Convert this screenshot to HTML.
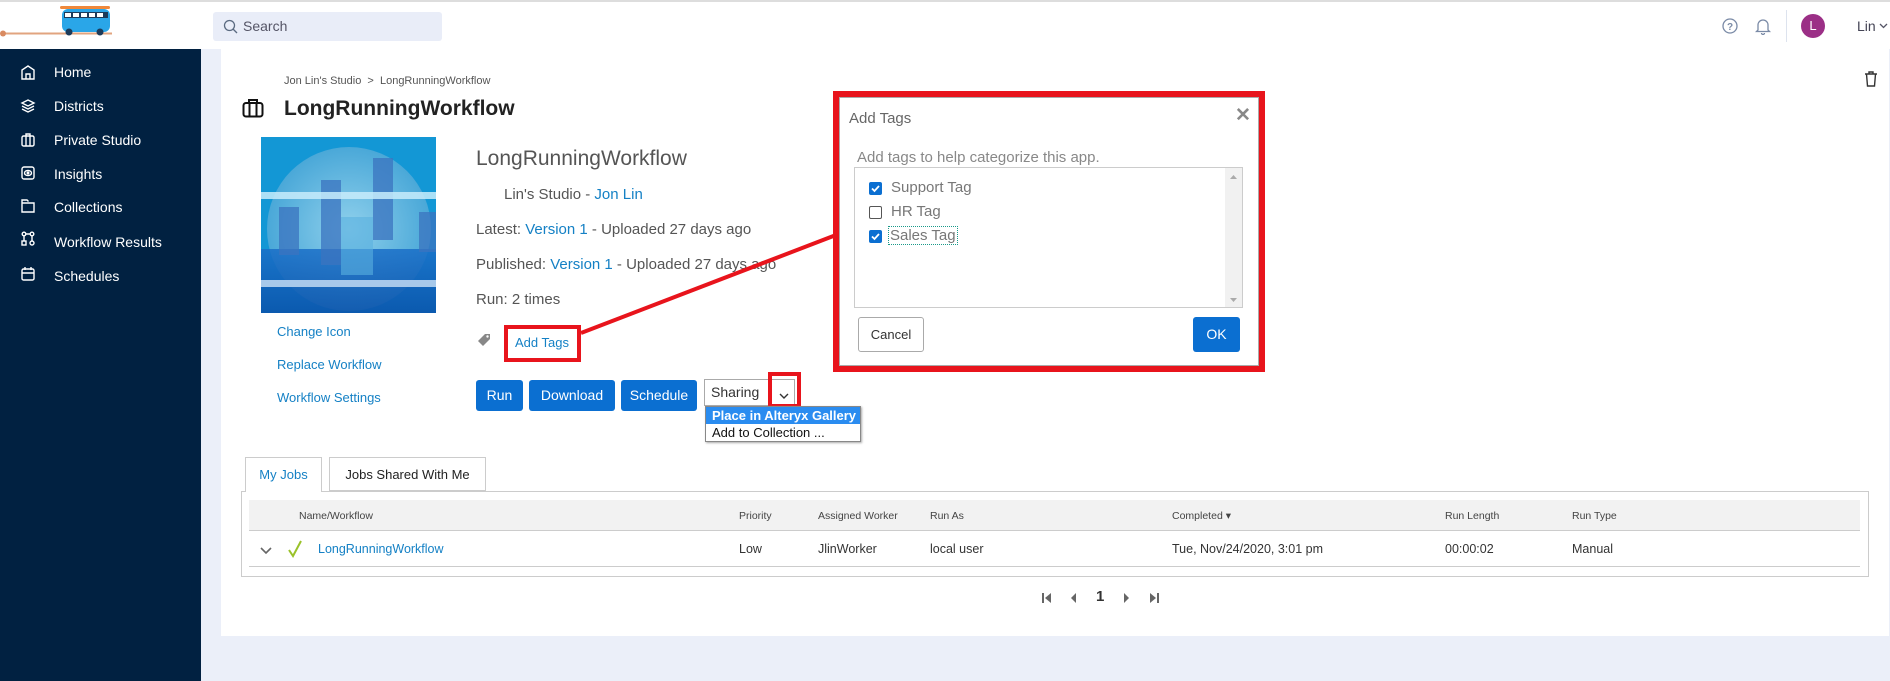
<!DOCTYPE html>
<html><head><meta charset="utf-8"><style>
*{box-sizing:border-box;margin:0;padding:0}
body{width:1890px;height:681px;overflow:hidden;background:#ebeff9;font-family:"Liberation Sans",sans-serif;position:relative}
.a{position:absolute}
.blue{color:#1581c5 !important}
.nav{position:absolute;left:54px;color:#fff;font-size:14px}
.btn{position:absolute;top:380px;height:31px;background:#0b6fd1;color:#fff;font-size:14px;border-radius:3px;text-align:center;line-height:31px}
.th{position:absolute;top:510px;font-size:10.5px;color:#444}
.td{position:absolute;top:542px;font-size:12.5px;color:#333}
.cb{position:absolute;left:869px;width:13px;height:13px;border-radius:2px}
.cbon{background:#0b6fd1}
.cboff{border:1px solid #555;background:#fff}
.lt{position:absolute;left:891px;font-size:15px;color:#777}
</style></head><body>
<div class="a" style="left:0;top:0;width:1890px;height:49px;background:#fff;border-top:2px solid #ddd"></div>
<svg class="a" style="left:0;top:0" width="120" height="45" viewBox="0 0 120 45">
<line x1="3" y1="33.5" x2="112" y2="33.5" stroke="#e2a47f" stroke-width="2"/>
<circle cx="3" cy="33.5" r="3" fill="#d98a60"/>
<rect x="60" y="6" width="50" height="3" rx="1.5" fill="#f0883a"/>
<rect x="62" y="9" width="48" height="23" rx="6" fill="#2aa6e8"/>
<rect x="64" y="12" width="44" height="6" fill="#1c3b5a"/>
<g fill="#fff"><rect x="65" y="13" width="6" height="4"/><rect x="73" y="13" width="6" height="4"/><rect x="81" y="13" width="6" height="4"/><rect x="89" y="13" width="6" height="4"/><rect x="97" y="13" width="6" height="4"/></g>
<circle cx="69" cy="32" r="3.5" fill="#1c3b5a"/><circle cx="100" cy="32" r="3.5" fill="#1c3b5a"/>
</svg>
<div class="a" style="left:213px;top:12px;width:229px;height:29px;background:#e9edf8;border-radius:3px"></div>
<svg class="a" style="left:223px;top:19px" width="15" height="15" viewBox="0 0 15 15"><circle cx="6.5" cy="6.5" r="5" fill="none" stroke="#5a6a80" stroke-width="1.3"/><line x1="10" y1="10" x2="14" y2="14" stroke="#5a6a80" stroke-width="1.3"/></svg>
<div class="a" style="left:243px;top:18px;font-size:14px;color:#556">Search</div>
<svg class="a" style="left:1722px;top:18px" width="16" height="16" viewBox="0 0 16 16"><circle cx="8" cy="8" r="7" fill="none" stroke="#7a8aa6" stroke-width="1.3"/><text x="8" y="12" font-size="10" text-anchor="middle" fill="#7a8aa6" font-family="Liberation Sans" font-weight="bold">?</text></svg>
<svg class="a" style="left:1755px;top:17px" width="16" height="18" viewBox="0 0 16 18"><path d="M3 13V8a5 5 0 0 1 10 0v5l1.5 1.5h-13z M6.5 16a1.5 1.5 0 0 0 3 0" fill="none" stroke="#7a8aa6" stroke-width="1.3"/></svg>
<div class="a" style="left:1786px;top:10px;width:1px;height:32px;background:#dde3ee"></div>
<div class="a" style="left:1801px;top:14px;width:24px;height:24px;border-radius:50%;background:#9b2f86;color:#fff;font-size:13px;text-align:center;line-height:24px">L</div>
<div class="a" style="left:1857px;top:18px;font-size:14px;color:#445">Lin</div>
<svg class="a" style="left:1879px;top:23px" width="9" height="6" viewBox="0 0 9 6"><path d="M1 1l3.5 3.5L8 1" fill="none" stroke="#556" stroke-width="1.3"/></svg>
<div class="a" style="left:0;top:49px;width:201px;height:632px;background:#012141"></div>
<svg class="a" style="left:20px;top:64px" width="16" height="230" viewBox="0 0 16 230" fill="none" stroke="#fff" stroke-width="1.4">
<path d="M2 15V6l6-4 6 4v9zM6 15V10h4v5"/>
<path d="M8 36l6 3-6 3-6-3zM2 42l6 3 6-3M2 45l6 3 6-3"/>
<rect x="2" y="72" width="12" height="10" rx="1.5"/><path d="M6 72v-2h4v2M6 72v10M10 72v10"/>
<rect x="2" y="103" width="12" height="12" rx="2"/><ellipse cx="8" cy="109" rx="3.5" ry="2.5"/><circle cx="8" cy="109" r="0.8" fill="#fff"/>
<path d="M2 139h12v9H2zM2 139v-3h5l1.5 1.5"/>
<circle cx="4" cy="170" r="1.8"/><circle cx="12" cy="170" r="1.8"/><rect x="2" y="177" width="4" height="4"/><circle cx="12" cy="179" r="2"/><path d="M4 172v5M12 172v5M6 170h4"/>
<rect x="2" y="205" width="12" height="11" rx="1.5"/><path d="M2 209h12M5 203v3M11 203v3"/>
</svg>
<div class="nav" style="top:64px">Home</div>
<div class="nav" style="top:98px">Districts</div>
<div class="nav" style="top:132px">Private Studio</div>
<div class="nav" style="top:166px">Insights</div>
<div class="nav" style="top:199px">Collections</div>
<div class="nav" style="top:234px">Workflow Results</div>
<div class="nav" style="top:268px">Schedules</div>
<div class="a" style="left:221px;top:49px;width:1668px;height:587px;background:#fff"></div>
<div class="a" style="left:284px;top:75px;font-size:11px;color:#555">Jon Lin's Studio &nbsp;&gt;&nbsp; LongRunningWorkflow</div>
<svg class="a" style="left:242px;top:98px" width="22" height="20" viewBox="0 0 22 20" fill="none" stroke="#111" stroke-width="2"><rect x="1.5" y="5" width="19" height="13.5" rx="2.5"/><path d="M7 5V2h8v3M7.5 5v13.5M14.5 5v13.5"/></svg>
<div class="a" style="left:284px;top:97px;font-size:21px;font-weight:bold;color:#222">LongRunningWorkflow</div>
<svg class="a" style="left:1864px;top:71px" width="14" height="16" viewBox="0 0 14 16" fill="none" stroke="#333" stroke-width="1.4"><path d="M1 3h12M5 3V1h4v2M2.5 3l1 12h7l1-12"/></svg>
<svg class="a" style="left:261px;top:137px" width="175" height="176" viewBox="0 0 175 176">
<defs><radialGradient id="g" cx="0.5" cy="0.5" r="0.5"><stop offset="0" stop-color="#8fd0ec"/><stop offset="1" stop-color="#4aa8d8"/></radialGradient>
<linearGradient id="d" x1="0" y1="0" x2="0" y2="1"><stop offset="0" stop-color="#1a6fc8"/><stop offset="1" stop-color="#0a4fa8"/></linearGradient></defs>
<rect width="175" height="176" fill="#1397d5"/>
<circle cx="88" cy="92" r="82" fill="url(#g)"/>
<rect x="0" y="112" width="175" height="64" fill="url(#d)" opacity="0.85"/>
<g fill="#3b74c0" opacity="0.75"><rect x="18" y="70" width="20" height="48"/><rect x="60" y="43" width="20" height="85"/><rect x="112" y="21" width="20" height="82"/><rect x="158" y="75" width="17" height="40"/></g>
<rect x="80" y="80" width="32" height="58" fill="#5ab0e0" opacity="0.6"/>
<rect x="0" y="55" width="175" height="7" fill="#c8ecfb" opacity="0.85"/>
<rect x="0" y="143" width="175" height="7" fill="#b8d4f0" opacity="0.9"/>
</svg>
<div class="a blue" style="left:277px;top:324px;font-size:13px">Change Icon</div>
<div class="a blue" style="left:277px;top:357px;font-size:13px">Replace Workflow</div>
<div class="a blue" style="left:277px;top:390px;font-size:13px">Workflow Settings</div>
<div class="a" style="left:476px;top:147px;font-size:21px;color:#555">LongRunningWorkflow</div>
<div class="a" style="left:504px;top:186px;font-size:15px;color:#555">Lin's Studio - <span class="blue">Jon Lin</span></div>
<div class="a" style="left:476px;top:221px;font-size:15px;color:#555">Latest: <span class="blue">Version 1</span> - Uploaded 27 days ago</div>
<div class="a" style="left:476px;top:256px;font-size:15px;color:#555">Published: <span class="blue">Version 1</span> - Uploaded 27 days ago</div>
<div class="a" style="left:476px;top:291px;font-size:15px;color:#555">Run: 2 times</div>
<svg class="a" style="left:476px;top:332px" width="16" height="16" viewBox="0 0 16 16"><path d="M2 9l7-7h5v5l-7 7z" fill="#888"/><circle cx="11.5" cy="4.5" r="1.2" fill="#fff"/></svg>
<div class="a blue" style="left:515px;top:335px;font-size:13px">Add Tags</div>
<div class="a" style="left:504px;top:325px;width:77px;height:37px;border:4px solid #e8141c"></div>
<svg class="a" style="left:0;top:0" width="1890" height="681"><line x1="581" y1="333" x2="836" y2="235" stroke="#e8141c" stroke-width="4"/></svg>
<div class="btn" style="left:476px;width:47px">Run</div>
<div class="btn" style="left:529px;width:86px">Download</div>
<div class="btn" style="left:621px;width:76px">Schedule</div>
<div class="a" style="left:704px;top:379px;width:91px;height:27px;border:1px solid #aaa;background:#fff"></div>
<div class="a" style="left:711px;top:384px;font-size:14px;color:#333">Sharing</div>
<div class="a" style="left:768px;top:372px;width:33px;height:36px;border:4px solid #e8141c"></div>
<svg class="a" style="left:779px;top:393px" width="10" height="6" viewBox="0 0 10 6"><path d="M1 1l4 4 4-4" fill="none" stroke="#333" stroke-width="1.4"/></svg>
<div class="a" style="left:705px;top:406px;width:156px;height:36px;border:1px solid #888;background:#fff;box-shadow:1px 1px 2px #aaa"></div>
<div class="a" style="left:706px;top:407px;width:154px;height:17px;background:#2a8cf0;color:#fff;font-size:13px;font-weight:bold;padding-left:6px;line-height:17px">Place in Alteryx Gallery</div>
<div class="a" style="left:712px;top:425px;font-size:13px;color:#111">Add to Collection ...</div>
<div class="a" style="left:833px;top:91px;width:432px;height:281px;border:6px solid #e8141c;background:#fff"></div>
<div class="a" style="left:839px;top:97px;width:420px;height:269px;border:1px solid #aaa"></div>
<div class="a" style="left:849px;top:110px;font-size:15px;color:#666">Add Tags</div>
<div class="a" style="left:1235px;top:104px;font-size:19px;font-weight:bold;color:#888">✕</div>
<div class="a" style="left:857px;top:149px;font-size:15px;color:#888">Add tags to help categorize this app.</div>
<div class="a" style="left:854px;top:167px;width:389px;height:141px;border:1px solid #ccc"></div>
<div class="a" style="left:1225px;top:168px;width:17px;height:139px;background:#f1f1f1"></div>
<svg class="a" style="left:1229px;top:174px" width="9" height="130"><path d="M1 5l3.5-4 3.5 4z" fill="#aaa"/><path d="M1 124l3.5 4 3.5-4z" fill="#aaa"/></svg>
<div class="cb cbon" style="top:182px"></div><svg class="a" style="left:870px;top:183px" width="11" height="11"><path d="M2 5.5l2.5 2.5 4.5-5" fill="none" stroke="#fff" stroke-width="1.8"/></svg>
<div class="cb cboff" style="top:206px"></div>
<div class="cb cbon" style="top:230px"></div><svg class="a" style="left:870px;top:231px" width="11" height="11"><path d="M2 5.5l2.5 2.5 4.5-5" fill="none" stroke="#fff" stroke-width="1.8"/></svg>
<div class="lt" style="top:179px">Support Tag</div>
<div class="lt" style="top:203px">HR Tag</div>
<div class="lt" style="top:227px;outline:1px dotted #1a9a8a;padding:0 1px;left:889px">Sales Tag</div>
<div class="a" style="left:858px;top:317px;width:66px;height:35px;border:1px solid #aaa;border-radius:3px;font-size:13px;color:#333;text-align:center;line-height:33px">Cancel</div>
<div class="a" style="left:1193px;top:317px;width:47px;height:35px;background:#0b6fd1;border-radius:3px;font-size:14px;color:#fff;text-align:center;line-height:35px">OK</div>
<div class="a" style="left:241px;top:491px;width:1628px;height:86px;border:1px solid #ccc"></div>
<div class="a" style="left:245px;top:457px;width:77px;height:35px;border:1px solid #ccc;border-bottom:none;background:#fff;font-size:13px;text-align:center;line-height:34px"><span class="blue">My Jobs</span></div>
<div class="a" style="left:329px;top:457px;width:157px;height:34px;border:1px solid #ccc;background:#fff;font-size:13px;color:#222;text-align:center;line-height:34px">Jobs Shared With Me</div>
<div class="a" style="left:249px;top:500px;width:1611px;height:31px;background:#f2f2f2;border-bottom:1px solid #ccc"></div>
<div class="th" style="left:299px">Name/Workflow</div>
<div class="th" style="left:739px">Priority</div>
<div class="th" style="left:818px">Assigned Worker</div>
<div class="th" style="left:930px">Run As</div>
<div class="th" style="left:1172px">Completed ▾</div>
<div class="th" style="left:1445px">Run Length</div>
<div class="th" style="left:1572px">Run Type</div>
<svg class="a" style="left:260px;top:547px" width="12" height="8"><path d="M1 1l5 5 5-5" fill="none" stroke="#666" stroke-width="1.6"/></svg>
<svg class="a" style="left:288px;top:540px" width="14" height="18"><path d="M1 10l4 6 8-15" fill="none" stroke="#9ac22a" stroke-width="2"/></svg>
<div class="td blue" style="left:318px">LongRunningWorkflow</div>
<div class="td" style="left:739px">Low</div>
<div class="td" style="left:818px">JlinWorker</div>
<div class="td" style="left:930px">local user</div>
<div class="td" style="left:1172px">Tue, Nov/24/2020, 3:01 pm</div>
<div class="td" style="left:1445px">00:00:02</div>
<div class="td" style="left:1572px">Manual</div>
<div class="a" style="left:249px;top:566px;width:1611px;height:1px;background:#ccc"></div>
<svg class="a" style="left:1040px;top:590px" width="125" height="16" fill="#666"><rect x="2" y="3" width="2" height="10"/><path d="M11 3v10l-6-5z"/><path d="M36 3v10l-5-5z"/><path d="M84 3v10l5-5z"/><path d="M110 3v10l6-5z"/><rect x="117" y="3" width="2" height="10"/></svg>
<div class="a" style="left:1096px;top:588px;font-size:15px;color:#333;font-weight:bold">1</div>
</body></html>
